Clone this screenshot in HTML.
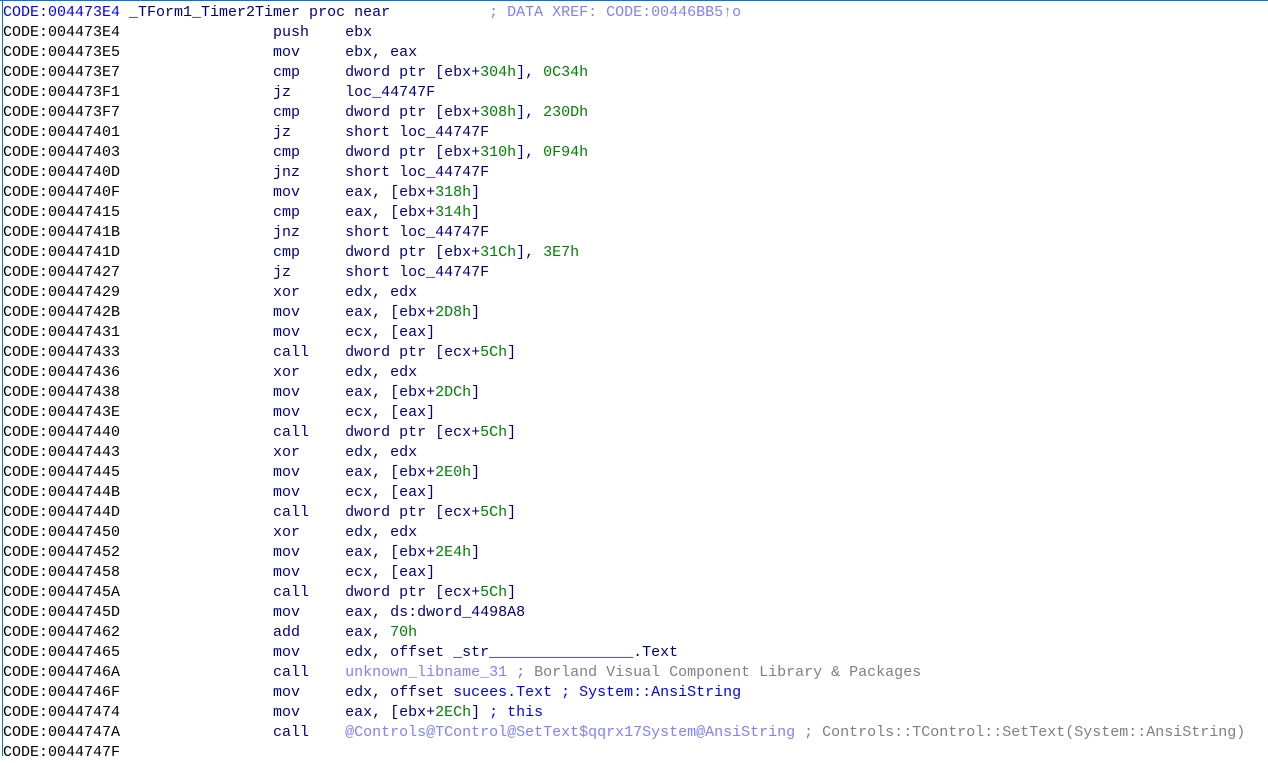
<!DOCTYPE html>
<html>
<head>
<meta charset="utf-8">
<style>
html,body{margin:0;padding:0;background:#fff;width:1268px;height:756px;overflow:hidden}
#t{position:absolute;left:0;top:0;width:1268px;height:1px;background:#0078d7}
#l{position:absolute;left:2px;top:0;width:1px;height:756px;background:#0078d7}
pre{position:absolute;left:3px;top:3px;margin:0;font:15px/20px "Liberation Mono","DejaVu Sans Mono",monospace;color:#000080;white-space:pre}
.a{color:#000}
.b{color:#0000ff}
.n{color:#008000}
.x{color:#8080ff}
.g{color:#808080}
</style>
</head>
<body>
<div id="t"></div><div id="l"></div>
<pre><span class="b">CODE:004473E4</span> _TForm1_Timer2Timer proc near           <span class="x">; DATA XREF: CODE:00446BB5↑o</span>
<span class="a">CODE:004473E4</span>                 push    ebx
<span class="a">CODE:004473E5</span>                 mov     ebx, eax
<span class="a">CODE:004473E7</span>                 cmp     dword ptr [ebx+<span class="n">304h</span>], <span class="n">0C34h</span>
<span class="a">CODE:004473F1</span>                 jz      loc_44747F
<span class="a">CODE:004473F7</span>                 cmp     dword ptr [ebx+<span class="n">308h</span>], <span class="n">230Dh</span>
<span class="a">CODE:00447401</span>                 jz      short loc_44747F
<span class="a">CODE:00447403</span>                 cmp     dword ptr [ebx+<span class="n">310h</span>], <span class="n">0F94h</span>
<span class="a">CODE:0044740D</span>                 jnz     short loc_44747F
<span class="a">CODE:0044740F</span>                 mov     eax, [ebx+<span class="n">318h</span>]
<span class="a">CODE:00447415</span>                 cmp     eax, [ebx+<span class="n">314h</span>]
<span class="a">CODE:0044741B</span>                 jnz     short loc_44747F
<span class="a">CODE:0044741D</span>                 cmp     dword ptr [ebx+<span class="n">31Ch</span>], <span class="n">3E7h</span>
<span class="a">CODE:00447427</span>                 jz      short loc_44747F
<span class="a">CODE:00447429</span>                 xor     edx, edx
<span class="a">CODE:0044742B</span>                 mov     eax, [ebx+<span class="n">2D8h</span>]
<span class="a">CODE:00447431</span>                 mov     ecx, [eax]
<span class="a">CODE:00447433</span>                 call    dword ptr [ecx+<span class="n">5Ch</span>]
<span class="a">CODE:00447436</span>                 xor     edx, edx
<span class="a">CODE:00447438</span>                 mov     eax, [ebx+<span class="n">2DCh</span>]
<span class="a">CODE:0044743E</span>                 mov     ecx, [eax]
<span class="a">CODE:00447440</span>                 call    dword ptr [ecx+<span class="n">5Ch</span>]
<span class="a">CODE:00447443</span>                 xor     edx, edx
<span class="a">CODE:00447445</span>                 mov     eax, [ebx+<span class="n">2E0h</span>]
<span class="a">CODE:0044744B</span>                 mov     ecx, [eax]
<span class="a">CODE:0044744D</span>                 call    dword ptr [ecx+<span class="n">5Ch</span>]
<span class="a">CODE:00447450</span>                 xor     edx, edx
<span class="a">CODE:00447452</span>                 mov     eax, [ebx+<span class="n">2E4h</span>]
<span class="a">CODE:00447458</span>                 mov     ecx, [eax]
<span class="a">CODE:0044745A</span>                 call    dword ptr [ecx+<span class="n">5Ch</span>]
<span class="a">CODE:0044745D</span>                 mov     eax, ds:dword_4498A8
<span class="a">CODE:00447462</span>                 add     eax, <span class="n">70h</span>
<span class="a">CODE:00447465</span>                 mov     edx, offset _str________________.Text
<span class="a">CODE:0044746A</span>                 call    <span class="x">unknown_libname_31</span> <span class="g">; Borland Visual Component Library &amp; Packages</span>
<span class="a">CODE:0044746F</span>                 mov     edx, offset <span class="b">sucees.Text ; System::AnsiString</span>
<span class="a">CODE:00447474</span>                 mov     eax, [ebx+<span class="n">2ECh</span>] <span class="b">; this</span>
<span class="a">CODE:0044747A</span>                 call    <span class="x">@Controls@TControl@SetText$qqrx17System@AnsiString</span> <span class="g">; Controls::TControl::SetText(System::AnsiString)</span>
<span class="a">CODE:0044747F</span></pre>
</body>
</html>
